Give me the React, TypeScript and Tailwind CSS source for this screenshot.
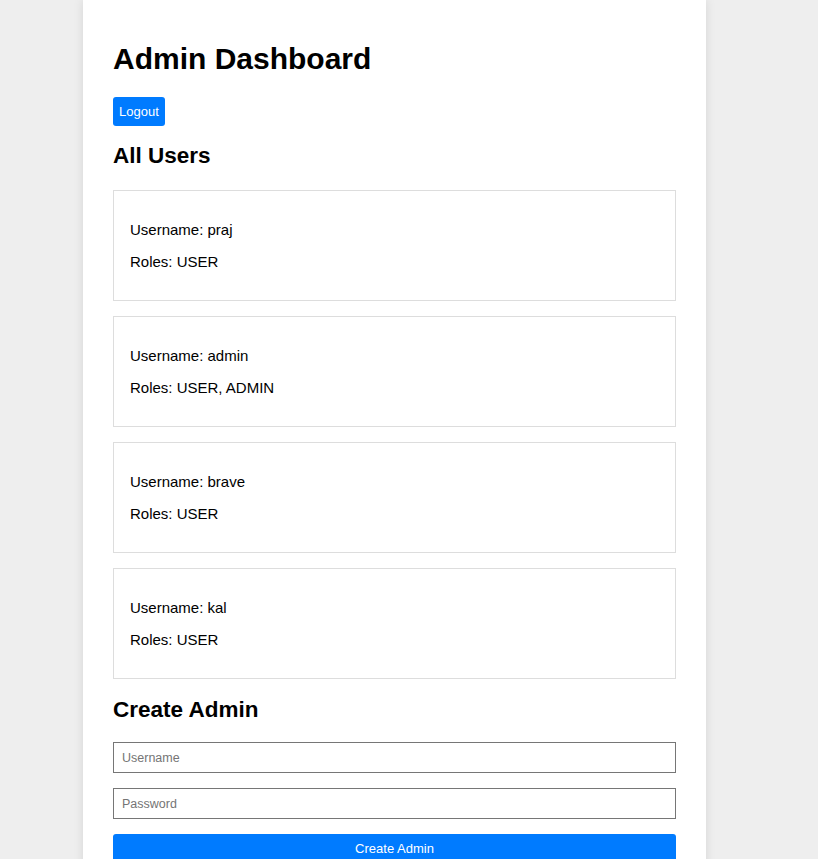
const users = [
  { username: "praj", roles: "USER" },
  { username: "admin", roles: "USER, ADMIN" },
  { username: "brave", roles: "USER" },
  { username: "kal", roles: "USER" },
];

export default function App() {
  return (
    <div className="min-h-screen bg-[#eeeeee] font-['Liberation_Sans',Arial,sans-serif] text-black">
      <div className="ml-[83px] w-[623px] bg-white px-[30px] pt-[40px] pb-[30px] shadow-[0_0_10px_rgba(0,0,0,0.1)]">
        <h1 className="text-[30px] font-bold leading-[38px]">Admin Dashboard</h1>

        <button className="mt-[19px] block rounded-[3px] bg-[#007bff] px-[6px] py-[6px] text-[13px] leading-[17px] text-white">
          Logout
        </button>

        <h2 className="mt-[16px] text-[22.5px] font-bold leading-[28px]">All Users</h2>

        {/* User list */}
        <div className="mt-[20px] flex flex-col gap-[15px]">
          {users.map((u) => (
            <div
              key={u.username}
              className="flex h-[111px] flex-col gap-[14px] border border-[#dddddd] px-[16px] pt-[30px] text-[15px] leading-[18px]"
            >
              <p>Username: {u.username}</p>
              <p>Roles: {u.roles}</p>
            </div>
          ))}
        </div>

        <h2 className="mt-[17px] text-[22.5px] font-bold leading-[28px]">Create Admin</h2>

        {/* Create admin form */}
        <div className="mt-[18px] flex flex-col gap-[15px]">
          <input
            type="text"
            placeholder="Username"
            className="block h-[31px] w-full border border-[#767676] px-[8px] text-[12.5px] outline-none placeholder:text-[#757575]"
          />
          <input
            type="password"
            placeholder="Password"
            className="block h-[31px] w-full border border-[#767676] px-[8px] text-[12.5px] outline-none placeholder:text-[#757575]"
          />
          <button className="block w-full rounded-[3px] bg-[#007bff] py-[6px] text-[13px] leading-[17px] text-white">
            Create Admin
          </button>
        </div>
      </div>
    </div>
  );
}
